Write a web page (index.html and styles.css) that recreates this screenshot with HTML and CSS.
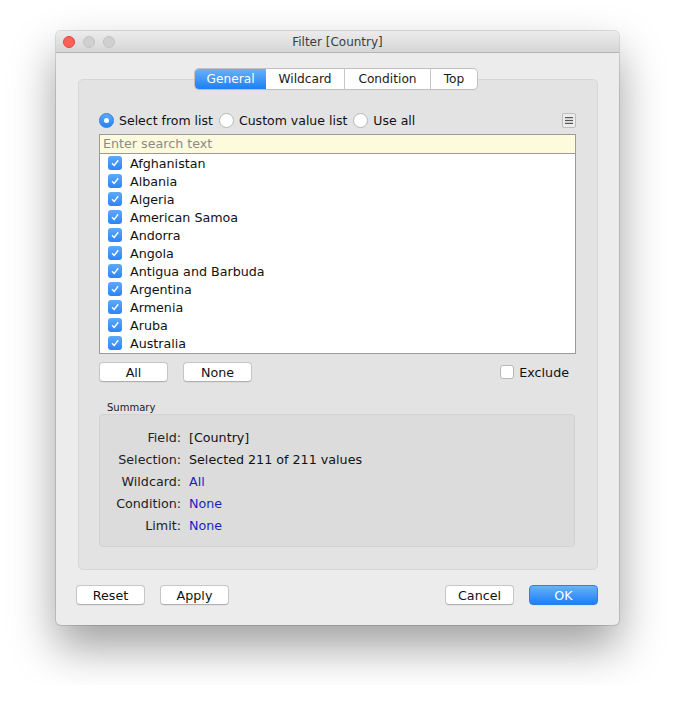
FILE: index.html
```html
<!DOCTYPE html>
<html>
<head>
<meta charset="utf-8">
<link rel="stylesheet" href="styles.css">
</head>
<body>
<div class="window">
  <div class="titlebar">
    <div class="lights">
      <span class="light red"></span><span class="light grey"></span><span class="light grey"></span>
    </div>
    <div class="title">Filter [Country]</div>
    <div></div>
  </div>
  <div class="content">
    <div class="tabview">
      <div class="tabs">
        <div class="tab active">General</div>
        <div class="tab">Wildcard</div>
        <div class="tab">Condition</div>
        <div class="tab last">Top</div>
      </div>
      <div class="panel">
        <div class="radio-row">
          <label class="radio"><span class="rb on"></span>Select from list</label>
          <label class="radio"><span class="rb"></span>Custom value list</label>
          <label class="radio"><span class="rb"></span>Use all</label>
          <span class="menu-btn"><svg width="8" height="7" viewBox="0 0 8 7"><rect x="0" y="0" width="8" height="1.2" fill="#555"/><rect x="0" y="2.9" width="8" height="1.2" fill="#555"/><rect x="0" y="5.8" width="8" height="1.2" fill="#555"/></svg></span>
        </div>
        <div class="listbox">
          <div class="search">Enter search text</div>
          <div class="items">
            <div class="item"><span class="cb"><svg width="10" height="10" viewBox="0 0 10 10"><path d="M2 5.2 L4.2 7.5 L8.2 2.3" fill="none" stroke="#fff" stroke-width="1.4"/></svg></span>Afghanistan</div>
            <div class="item"><span class="cb"><svg width="10" height="10" viewBox="0 0 10 10"><path d="M2 5.2 L4.2 7.5 L8.2 2.3" fill="none" stroke="#fff" stroke-width="1.4"/></svg></span>Albania</div>
            <div class="item"><span class="cb"><svg width="10" height="10" viewBox="0 0 10 10"><path d="M2 5.2 L4.2 7.5 L8.2 2.3" fill="none" stroke="#fff" stroke-width="1.4"/></svg></span>Algeria</div>
            <div class="item"><span class="cb"><svg width="10" height="10" viewBox="0 0 10 10"><path d="M2 5.2 L4.2 7.5 L8.2 2.3" fill="none" stroke="#fff" stroke-width="1.4"/></svg></span>American Samoa</div>
            <div class="item"><span class="cb"><svg width="10" height="10" viewBox="0 0 10 10"><path d="M2 5.2 L4.2 7.5 L8.2 2.3" fill="none" stroke="#fff" stroke-width="1.4"/></svg></span>Andorra</div>
            <div class="item"><span class="cb"><svg width="10" height="10" viewBox="0 0 10 10"><path d="M2 5.2 L4.2 7.5 L8.2 2.3" fill="none" stroke="#fff" stroke-width="1.4"/></svg></span>Angola</div>
            <div class="item"><span class="cb"><svg width="10" height="10" viewBox="0 0 10 10"><path d="M2 5.2 L4.2 7.5 L8.2 2.3" fill="none" stroke="#fff" stroke-width="1.4"/></svg></span>Antigua and Barbuda</div>
            <div class="item"><span class="cb"><svg width="10" height="10" viewBox="0 0 10 10"><path d="M2 5.2 L4.2 7.5 L8.2 2.3" fill="none" stroke="#fff" stroke-width="1.4"/></svg></span>Argentina</div>
            <div class="item"><span class="cb"><svg width="10" height="10" viewBox="0 0 10 10"><path d="M2 5.2 L4.2 7.5 L8.2 2.3" fill="none" stroke="#fff" stroke-width="1.4"/></svg></span>Armenia</div>
            <div class="item"><span class="cb"><svg width="10" height="10" viewBox="0 0 10 10"><path d="M2 5.2 L4.2 7.5 L8.2 2.3" fill="none" stroke="#fff" stroke-width="1.4"/></svg></span>Aruba</div>
            <div class="item"><span class="cb"><svg width="10" height="10" viewBox="0 0 10 10"><path d="M2 5.2 L4.2 7.5 L8.2 2.3" fill="none" stroke="#fff" stroke-width="1.4"/></svg></span>Australia</div>
          </div>
        </div>
        <div class="list-actions">
          <button class="btn">All</button>
          <button class="btn">None</button>
          <label class="exclude"><span class="cb-empty"></span>Exclude</label>
        </div>
        <div class="summary-label">Summary</div>
        <div class="summary">
          <span class="k">Field:</span><span class="v">[Country]</span>
          <span class="k">Selection:</span><span class="v">Selected 211 of 211 values</span>
          <span class="k">Wildcard:</span><span class="v link">All</span>
          <span class="k">Condition:</span><span class="v link">None</span>
          <span class="k">Limit:</span><span class="v link">None</span>
        </div>
      </div>
    </div>
    <div class="footer">
      <div class="group">
        <button class="btn">Reset</button>
        <button class="btn">Apply</button>
      </div>
      <div class="group">
        <button class="btn">Cancel</button>
        <button class="btn primary">OK</button>
      </div>
    </div>
  </div>
</div>
</body>
</html>
```
FILE: styles.css
```css
html, body {
  margin: 0;
  padding: 0;
  background: #ffffff;
}
body {
  font-family: "DejaVu Sans", "Liberation Sans", sans-serif;
  font-size: 12.7px;
  color: #1a1a1a;
  padding: 31px 0 60px 56px;
}
.window {
  width: 563px;
  height: 594px;
  background: #ececec;
  border-radius: 5px;
  box-shadow: 0 22px 45px rgba(0,0,0,0.38), 0 0 0 1px rgba(0,0,0,0.12);
  display: flex;
  flex-direction: column;
  overflow: hidden;
}
.titlebar {
  height: 22px;
  box-sizing: border-box;
  background: linear-gradient(#ececec, #d6d6d6);
  border-bottom: 1px solid #b4b4b4;
  display: grid;
  grid-template-columns: 1fr auto 1fr;
  align-items: center;
}
.lights {
  display: flex;
  gap: 8px;
  padding-left: 7px;
}
.light {
  width: 12px;
  height: 12px;
  border-radius: 50%;
  box-sizing: border-box;
}
.light.red {
  background: #fc5f57;
  border: 1px solid #df4744;
}
.light.grey {
  background: #d0d0d0;
  border: 1px solid #c2c2c2;
}
.title {
  font-size: 12px;
  color: #3c3c3c;
  padding-top: 1px;
}
.content {
  flex: 1;
  display: flex;
  flex-direction: column;
  padding: 16px 21px 20px 22px;
}
.tabview {
  display: flex;
  flex-direction: column;
}
.tabs {
  display: flex;
  align-self: center;
  margin-left: -4px;
  height: 20px;
  margin-bottom: -10px;
  position: relative;
  z-index: 1;
  border-radius: 4px;
  box-shadow: 0 0 0 1px #c0c0c0, 0 1px 1px rgba(0,0,0,0.12);
  background: #fff;
  font-size: 12.2px;
}
.tab {
  height: 20px;
  line-height: 20px;
  text-align: center;
  border-right: 1px solid #c8c8c8;
  box-sizing: border-box;
  color: #1a1a1a;
}
.tab:nth-child(1) { width: 71px; }
.tab:nth-child(2) { width: 79px; }
.tab:nth-child(3) { width: 86px; }
.tab:nth-child(4) { width: 46px; border-right: none; }
.tab.active {
  background: linear-gradient(#69b1fa, #1b7ff5);
  color: #fff;
  border-radius: 4px 0 0 4px;
  border-right: none;
}
.panel {
  background: #e3e3e3;
  border: 1px solid #d6d6d6;
  border-radius: 5px;
  height: 491px;
  box-sizing: border-box;
  padding: 32px 21px 0 20px;
  display: flex;
  flex-direction: column;
}
.radio-row {
  display: flex;
  align-items: center;
  height: 16px;
  margin-bottom: 6px;
}
.radio {
  display: flex;
  align-items: center;
  margin-right: 6px;
  color: #111;
  font-size: 12.5px;
}
.rb {
  width: 15px;
  height: 15px;
  box-sizing: border-box;
  border-radius: 50%;
  background: #fff;
  border: 1px solid #b6b6b6;
  margin-right: 5px;
  display: flex;
  align-items: center;
  justify-content: center;
}
.rb.on {
  background: linear-gradient(#5eaafa, #2483f6);
  border-color: #2f7ee6;
}
.rb.on::after {
  content: "";
  width: 5px;
  height: 5px;
  border-radius: 50%;
  background: #fff;
}
.menu-btn {
  margin-left: auto;
  width: 14px;
  height: 15px;
  box-sizing: border-box;
  border: 1px solid #bdbdbd;
  background: #ececec;
  border-radius: 2px;
  display: flex;
  align-items: center;
  justify-content: center;
}
.listbox {
  border: 1px solid #9b9b9b;
  background: #fff;
  height: 220px;
  box-sizing: border-box;
}
.search {
  height: 19px;
  line-height: 18px;
  background: #fefbdc;
  border-bottom: 1px solid #9a9a9a;
  box-sizing: border-box;
  padding-left: 3px;
  color: #8a8a8a;
}
.item {
  height: 18px;
  display: flex;
  align-items: center;
  padding-left: 8px;
  color: #111;
}
.cb {
  width: 14px;
  height: 14px;
  border-radius: 3px;
  background: linear-gradient(#5ea9fa, #2a85f6);
  margin-right: 8px;
  display: flex;
  align-items: center;
  justify-content: center;
}
.list-actions {
  display: flex;
  align-items: center;
  margin-top: 8px;
  gap: 15px;
}
.btn {
  font-family: inherit;
  font-size: 12.7px;
  color: #111;
  width: 69px;
  height: 20px;
  padding: 0;
  background: #fff;
  border: 1px solid #c6c6c6;
  border-bottom-color: #b0b0b0;
  border-radius: 4px;
  box-shadow: 0 0.5px 0.5px rgba(0,0,0,0.08);
}
.exclude {
  margin-left: auto;
  display: flex;
  align-items: center;
  margin-right: 7px;
  color: #111;
}
.cb-empty {
  width: 14px;
  height: 14px;
  box-sizing: border-box;
  border: 1px solid #b7b7b7;
  border-radius: 3px;
  background: #fff;
  margin-right: 5px;
}
.summary-label {
  font-size: 10px;
  margin-top: 20px;
  padding-left: 8px;
  height: 12px;
  line-height: 12px;
  color: #222;
}
.summary {
  margin-top: 0;
  background: #dcdcdc;
  border: 1px solid #d2d2d2;
  border-radius: 4px;
  height: 133px;
  box-sizing: border-box;
  padding: 11px 0 0 0;
  display: grid;
  grid-template-columns: 81px 1fr;
  grid-auto-rows: 22px;
  column-gap: 8px;
  align-items: center;
  margin-right: 1px;
}
.k {
  text-align: right;
  color: #222;
}
.v {
  color: #111;
}
.v.link {
  color: #1c1cc4;
}
.footer {
  margin-top: auto;
  display: flex;
  justify-content: space-between;
  margin-left: -2px;
}
.group {
  display: flex;
  gap: 15px;
}
.btn.primary {
  background: linear-gradient(#69b1fa, #1b7ff5);
  color: #fff;
  border-color: #2f7fe8;
}
```
